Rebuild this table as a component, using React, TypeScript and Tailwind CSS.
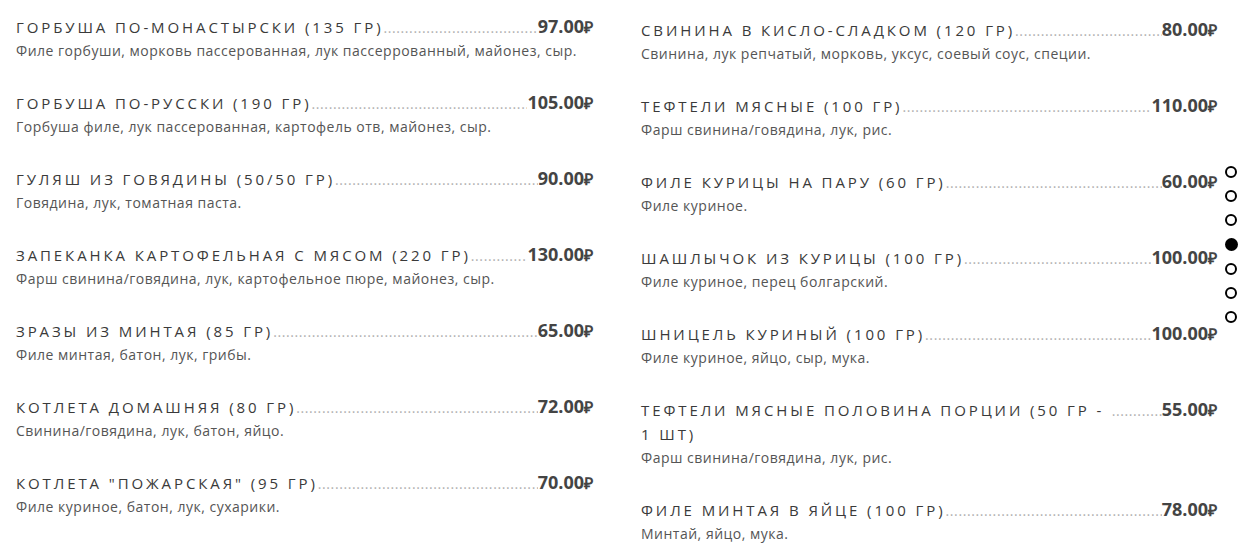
import React from "react";

interface Dish {
  name: string;
  desc: string;
  price: string;
}

const leftDishes: Dish[] = [
  { name: "Горбуша по-монастырски (135 гр)", desc: "Филе горбуши, морковь пассерованная, лук пассеррованный, майонез, сыр.", price: "97.00" },
  { name: "Горбуша по-русски (190 гр)", desc: "Горбуша филе, лук пассерованная, картофель отв, майонез, сыр.", price: "105.00" },
  { name: "Гуляш из говядины (50/50 гр)", desc: "Говядина, лук, томатная паста.", price: "90.00" },
  { name: "Запеканка картофельная с мясом (220 гр)", desc: "Фарш свинина/говядина, лук, картофельное пюре, майонез, сыр.", price: "130.00" },
  { name: "Зразы из минтая (85 гр)", desc: "Филе минтая, батон, лук, грибы.", price: "65.00" },
  { name: "Котлета домашняя (80 гр)", desc: "Свинина/говядина, лук, батон, яйцо.", price: "72.00" },
  { name: "Котлета \"Пожарская\" (95 гр)", desc: "Филе куриное, батон, лук, сухарики.", price: "70.00" },
];

const rightDishes: Dish[] = [
  { name: "Свинина в кисло-сладком (120 гр)", desc: "Свинина, лук репчатый, морковь, уксус, соевый соус, специи.", price: "80.00" },
  { name: "Тефтели мясные (100 гр)", desc: "Фарш свинина/говядина, лук, рис.", price: "110.00" },
  { name: "Филе курицы на пару (60 гр)", desc: "Филе куриное.", price: "60.00" },
  { name: "Шашлычок из курицы (100 гр)", desc: "Филе куриное, перец болгарский.", price: "100.00" },
  { name: "Шницель куриный (100 гр)", desc: "Филе куриное, яйцо, сыр, мука.", price: "100.00" },
  { name: "Тефтели мясные половина порции (50 гр - 1 шт)", desc: "Фарш свинина/говядина, лук, рис.", price: "55.00" },
  { name: "Филе минтая в яйце (100 гр)", desc: "Минтай, яйцо, мука.", price: "78.00" },
];

const LEADER = ".".repeat(200);

function MenuItem({ dish }: { dish: Dish }) {
  return (
    <div className="mb-[28px]">
      <div className="flex items-baseline">
        <span className="uppercase text-[15px] leading-6 tracking-[2.9px] text-[#3a3a3a]">{dish.name}</span>
        <span className="flex-1 min-w-[50px] overflow-hidden whitespace-nowrap text-[14px] text-[#b0b0b0] tracking-[0.6px]">
          {LEADER}
        </span>
        <span className="text-[18px] leading-6 font-bold text-[#444] whitespace-nowrap">
          {dish.price}
          <span className="text-[16px]">₽</span>
        </span>
      </div>
      <div className="text-[14px] leading-[23px] tracking-[0.5px] text-[#555]">{dish.desc}</div>
    </div>
  );
}

export default function App() {
  return (
    <div className="w-[1250px] h-[546px] overflow-hidden bg-white flex" style={{ fontFamily: "'Open Sans', sans-serif" }}>
      <div className="flex gap-[48px] pl-4 pt-[14px]">
        <div className="w-[577px]">
          {leftDishes.map((d) => (
            <MenuItem key={d.name} dish={d} />
          ))}
        </div>
        <div className="w-[576px] pt-[3px]">
          {rightDishes.map((d) => (
            <MenuItem key={d.name} dish={d} />
          ))}
        </div>
      </div>

      {/* section dots */}
      <div className="flex flex-col items-center gap-[12px] pt-[166px] ml-[7px] w-[14px]">
        {[0, 1, 2, 3, 4, 5, 6].map((i) =>
          i === 3 ? (
            <span key={i} className="w-[13px] h-[13px] rounded-full bg-black" />
          ) : (
            <span key={i} className="w-[12px] h-[12px] rounded-full border-2 border-black" />
          )
        )}
      </div>
    </div>
  );
}
